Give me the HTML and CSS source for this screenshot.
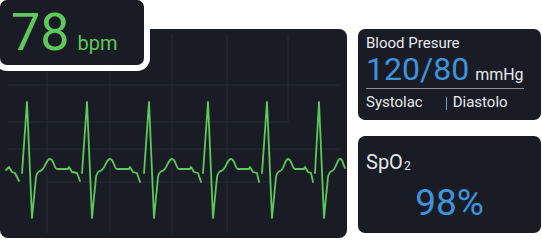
FILE: index.html
```html
<!DOCTYPE html>
<html>
<head>
<meta charset="utf-8">
<link rel="stylesheet" href="styles.css">
</head>
<body>
<div class="wrap">
  <div class="ecg">
    <div class="badge">
      <span class="bpm-val">78</span><span class="bpm-unit">bpm</span>
    </div>
    <svg class="trace" width="347" height="209" viewBox="0 29 347 209">
      <g class="grid">
        <line x1="8" y1="85" x2="340" y2="85"/>
        <line x1="8" y1="122" x2="288" y2="122"/>
        <line x1="8" y1="149" x2="340" y2="149"/>
        <line x1="46" y1="182" x2="270" y2="182"/>
        <line x1="47" y1="34" x2="47" y2="233"/>
        <line x1="110" y1="34" x2="110" y2="233"/>
        <line x1="172" y1="34" x2="172" y2="233"/>
        <line x1="227" y1="34" x2="227" y2="233"/>
        <line x1="288" y1="34" x2="288" y2="122"/>
        <line x1="270" y1="149" x2="270" y2="182"/>
      </g>
      <path class="wave" d="M6 170 L9 167 L12 172 L15 173 L19 181
        M22 173 L27 102 L32 218 L36 177 Q37 172 40 171 C45 170 46 159 50 159 C54 159 54 169 57 169 L68 169 L69 167 L72 172 L77 173 L80 181
        M82 173 L87 102 L92 218 L96 177 Q97 172 100 171 C105 170 106 159 110 159 C114 159 114 169 117 169 L129 169 L130 167 L133 172 L137 173 L140 182
        M144 173 L149 102 L154 218 L158 177 Q159 172 162 171 C167 170 168 159 172 159 C176 159 176 169 179 169 L190 169 L191 167 L194 172 L198 173 L201 182
        M203 173 L208 102 L213 218 L217 177 Q218 172 221 171 C226 170 227 159 231 159 C235 159 235 169 238 169 L249 169 L250 167 L253 172 L257 173 L259 182
        M262 173 L267 102 L272 218 L276 177 Q277 172 280 171 C284 170 285 159 288 159 C292 159 292 169 295 169 L304 169 L305 167 L308 172 L311 173 L313 182
        M315 173 L319 102 L324 218 L328 177 Q329 172 332 171 C336 170 337 159 340 159 C343 159 343 165 345 168"/>
    </svg>
  </div>
  <div class="side">
    <div class="card bp">
      <div class="label">Blood Presure</div>
      <div class="bp-row"><span class="bp-val">120/80</span><span class="bp-unit">mmHg</span></div>
      <div class="rule"></div>
      <div class="bp-sub"><span>Systolac</span><span class="sep"></span><span>Diastolo</span></div>
    </div>
    <div class="card spo">
      <div class="spo-label">SpO<span class="sub">2</span></div>
      <div class="spo-val">98%</div>
    </div>
  </div>
</div>
</body>
</html>
```
FILE: styles.css
```css
html, body {
  margin: 0;
  padding: 0;
  background: #ffffff;
}
body {
  width: 542px;
  height: 240px;
  overflow: hidden;
  font-family: Roboto, "Liberation Sans", sans-serif;
}
.wrap {
  display: flex;
  gap: 11px;
  padding-top: 29px;
}
.ecg {
  position: relative;
  width: 347px;
  height: 209px;
  background: #191c25;
  border-radius: 8px;
  flex: none;
}
.trace {
  display: block;
}
.grid line {
  stroke: #272b35;
  stroke-width: 1;
}
.wave {
  fill: none;
  stroke: #5ec95b;
  stroke-width: 1.8;
  stroke-linejoin: round;
  stroke-linecap: round;
}
.badge {
  position: absolute;
  left: 0;
  top: -29px;
  width: 144px;
  height: 65px;
  box-sizing: border-box;
  background: #191c25;
  border-radius: 7px;
  box-shadow: 0 0 0 6px #ffffff;
  display: flex;
  align-items: baseline;
  padding: 5px 0 0 11px;
  color: #5ec95b;
}
.bpm-val {
  font-size: 52px;
  line-height: 56px;
}
.bpm-unit {
  font-size: 20px;
  margin-left: 8px;
}
.side {
  display: flex;
  flex-direction: column;
  gap: 16px;
  width: 183px;
}
.card {
  background: #191c25;
  border-radius: 7px;
  box-sizing: border-box;
  padding-left: 8px;
  color: #e8e9ec;
}
.bp {
  height: 91px;
  padding-top: 5px;
}
.label {
  font-size: 15px;
  line-height: 18px;
}
.bp-row {
  display: flex;
  align-items: baseline;
  height: 34px;
}
.bp-val {
  font-size: 32px;
  line-height: 34px;
  color: #3e93db;
}
.bp-unit {
  font-size: 16px;
  margin-left: 6px;
}
.rule {
  width: 158px;
  height: 1px;
  margin: 2px 0 0 0;
  background: #8b909b;
}
.bp-sub {
  display: flex;
  align-items: center;
  font-size: 15px;
  line-height: 17px;
  margin-top: 5px;
}
.sep {
  width: 1px;
  height: 13px;
  background: #7d97b6;
  margin: 1px 6px 0 23px;
}
.spo {
  height: 97px;
  padding-top: 15px;
}
.spo-label {
  font-size: 20px;
  line-height: 22px;
}
.sub {
  font-size: 12px;
  vertical-align: -1px;
  margin-left: 1px;
}
.spo-val {
  font-size: 37px;
  line-height: 40px;
  margin-top: 6px;
  margin-left: -8px;
  text-align: center;
  color: #3e93db;
}
```
